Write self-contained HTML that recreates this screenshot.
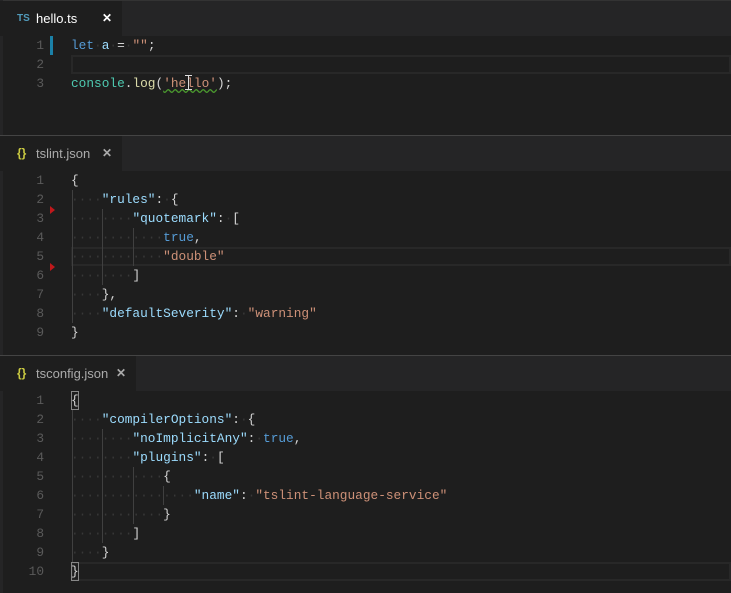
<!DOCTYPE html>
<html><head><meta charset="utf-8"><style>
*{margin:0;padding:0;box-sizing:border-box}
body{width:731px;height:593px;background:#1e1e1e;position:relative;overflow:hidden;font-family:"Liberation Mono",monospace;font-size:12.8px}
.a{position:absolute}
.bar{position:absolute;left:0;width:731px;height:35px;background:#252526}
.tab{position:absolute;left:0;top:0;height:35px;background:#1e1e1e;font-family:"Liberation Sans",sans-serif;font-size:13px;line-height:35px;color:#fff}
.tab .ic{position:absolute;left:17px;font-weight:bold}
.tab .x{position:absolute;font-size:12px;font-weight:bold}
.ln{position:absolute;left:0;width:44px;text-align:right;color:#5a5a5a;height:19px;line-height:19px}
.l{position:absolute;left:71px;height:19px;line-height:19px;white-space:pre;color:#d4d4d4}
.d{color:#383838}
.k{color:#9cdcfe}.s{color:#ce9178}.b{color:#569cd6}.t{color:#4ec9b0}.f{color:#dcdcaa}
.g{position:absolute;width:1px;background:#404040}
.cur{position:absolute;left:71px;width:660px;height:19px;border:2px solid #282828}
.tri{position:absolute;left:50px;width:0;height:0;border-top:4px solid transparent;border-bottom:4px solid transparent;border-left:5px solid #c0181b}
.sep{position:absolute;left:0;width:731px;height:1px;background:#444}
.bm{position:absolute;width:8px;height:19px;border:1px solid #888}
</style></head><body>
<div class="a" style="left:0;top:0;width:731px;height:1px;background:#333"></div>
<div class="a" style="left:0;top:0;width:3px;height:593px;background:#252526"></div>

<div class="bar" style="top:1px"><div class="tab" style="width:122px"><span class="ic" style="color:#519aba;font-size:10px">TS</span><span style="position:absolute;left:36px">hello.ts</span><span class="x" style="left:102px">✕</span></div></div>
<div class="cur" style="top:55px"></div>
<div class="a" style="left:50px;top:36px;width:3px;height:19px;background:#1b81a8"></div>
<div class="ln" style="top:36px">1</div><div class="ln" style="top:55px">2</div><div class="ln" style="top:74px">3</div>
<div class="l" style="top:36px"><span class="b">let</span><span class="d">·</span><span class="k">a</span><span class="d">·</span>=<span class="d">·</span><span class="s">""</span>;</div>
<div class="l" style="top:74px"><span class="t">console</span>.<span class="f">log</span>(<span class="s" style="text-decoration:underline wavy #4b9a2e">'hello'</span>);</div>
<div class="a" style="left:188px;top:75px;width:1px;height:15px;background:#ddd"></div>
<div class="a" style="left:185px;top:75px;width:7px;height:1px;background:#ddd"></div>
<div class="a" style="left:185px;top:89px;width:7px;height:1px;background:#ddd"></div>

<div class="sep" style="top:135px"></div>
<div class="bar" style="top:136px"><div class="tab" style="width:122px;color:#ccc"><span class="ic" style="color:#cbcb41;font-size:12px">{}</span><span style="position:absolute;left:36px;color:#aaa">tslint.json</span><span class="x" style="left:102px;color:#aaa">✕</span></div></div>
<div class="cur" style="top:247px"></div>
<div class="ln" style="top:171px">1</div><div class="ln" style="top:190px">2</div><div class="ln" style="top:209px">3</div><div class="ln" style="top:228px">4</div><div class="ln" style="top:247px">5</div><div class="ln" style="top:266px">6</div><div class="ln" style="top:285px">7</div><div class="ln" style="top:304px">8</div><div class="ln" style="top:323px">9</div>
<div class="g" style="left:72px;top:190px;height:133px"></div>
<div class="g" style="left:102px;top:209px;height:76px"></div>
<div class="g" style="left:133px;top:228px;height:38px"></div>
<div class="tri" style="top:206px"></div><div class="tri" style="top:263px"></div>
<div class="l" style="top:171px">{</div>
<div class="l" style="top:190px"><span class="d">····</span><span class="k">"rules"</span>:<span class="d">·</span>{</div>
<div class="l" style="top:209px"><span class="d">········</span><span class="k">"quotemark"</span>:<span class="d">·</span>[</div>
<div class="l" style="top:228px"><span class="d">············</span><span class="b">true</span>,</div>
<div class="l" style="top:247px"><span class="d">············</span><span class="s">"double"</span></div>
<div class="l" style="top:266px"><span class="d">········</span>]</div>
<div class="l" style="top:285px"><span class="d">····</span>},</div>
<div class="l" style="top:304px"><span class="d">····</span><span class="k">"defaultSeverity"</span>:<span class="d">·</span><span class="s">"warning"</span></div>
<div class="l" style="top:323px">}</div>

<div class="sep" style="top:355px"></div>
<div class="bar" style="top:356px"><div class="tab" style="width:136px"><span class="ic" style="color:#cbcb41;font-size:12px">{}</span><span style="position:absolute;left:36px;color:#aaa">tsconfig.json</span><span class="x" style="left:116px;color:#aaa">✕</span></div></div>
<div class="cur" style="top:562px"></div>
<div class="ln" style="top:391px">1</div><div class="ln" style="top:410px">2</div><div class="ln" style="top:429px">3</div><div class="ln" style="top:448px">4</div><div class="ln" style="top:467px">5</div><div class="ln" style="top:486px">6</div><div class="ln" style="top:505px">7</div><div class="ln" style="top:524px">8</div><div class="ln" style="top:543px">9</div><div class="ln" style="top:562px">10</div>
<div class="g" style="left:72px;top:410px;height:152px"></div>
<div class="g" style="left:102px;top:429px;height:114px"></div>
<div class="g" style="left:133px;top:467px;height:57px"></div>
<div class="g" style="left:163px;top:486px;height:19px"></div>
<div class="bm" style="left:71px;top:391px"></div><div class="bm" style="left:71px;top:562px"></div>
<div class="l" style="top:391px">{</div>
<div class="l" style="top:410px"><span class="d">····</span><span class="k">"compilerOptions"</span>:<span class="d">·</span>{</div>
<div class="l" style="top:429px"><span class="d">········</span><span class="k">"noImplicitAny"</span>:<span class="d">·</span><span class="b">true</span>,</div>
<div class="l" style="top:448px"><span class="d">········</span><span class="k">"plugins"</span>:<span class="d">·</span>[</div>
<div class="l" style="top:467px"><span class="d">············</span>{</div>
<div class="l" style="top:486px"><span class="d">················</span><span class="k">"name"</span>:<span class="d">·</span><span class="s">"tslint-language-service"</span></div>
<div class="l" style="top:505px"><span class="d">············</span>}</div>
<div class="l" style="top:524px"><span class="d">········</span>]</div>
<div class="l" style="top:543px"><span class="d">····</span>}</div>
<div class="l" style="top:562px">}</div>
</body></html>
